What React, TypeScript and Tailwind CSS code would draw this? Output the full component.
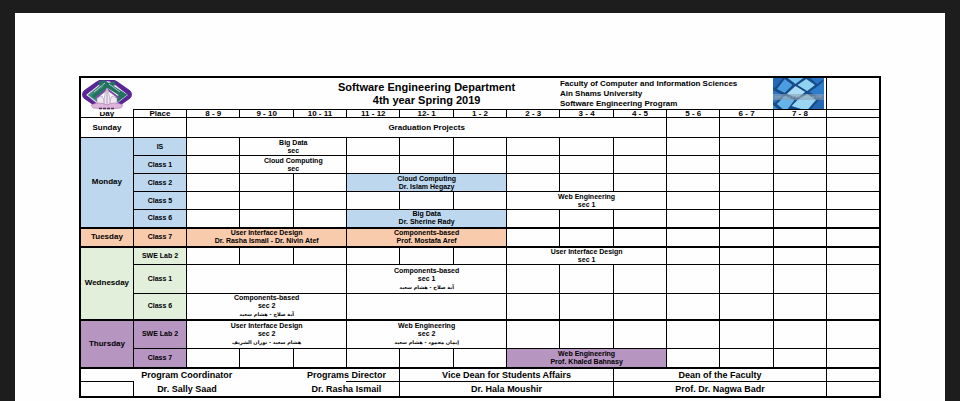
import React from 'react';

type Slot = { span?: number; lines?: string[]; arabic?: string; fill?: string };
type Row = {
  day?: string;
  daySpan?: number;
  tone: string;
  place: string;
  height: string;
  slots: Slot[];
};

const BLUE = 'bg-[#bdd7ee]';
const ORANGE = 'bg-[#f8cbad]';
const GREEN = 'bg-[#e2efda]';
const PURPLE = 'bg-[#b795c1]';

const HOURS = ['8 - 9', '9 - 10', '10 - 11', '11 - 12', '12- 1', '1 - 2', '2 - 3', '3 - 4', '4 - 5', '5 - 6', '6 - 7', '7 - 8'];

const blank = (count: number): Slot[] => Array.from({ length: count }, () => ({}));

const ROWS: Row[] = [
  { day: 'Monday', daySpan: 5, tone: BLUE, place: 'IS', height: 'h-[18px]', slots: [{}, { span: 2, lines: ['Big Data', 'sec'] }, ...blank(10)] },
  { tone: BLUE, place: 'Class 1', height: 'h-[18px]', slots: [{}, { span: 2, lines: ['Cloud Computing', 'sec'] }, ...blank(10)] },
  { tone: BLUE, place: 'Class 2', height: 'h-[18px]', slots: [...blank(3), { span: 3, lines: ['Cloud Computing', 'Dr. Islam Hegazy'], fill: BLUE }, ...blank(7)] },
  { tone: BLUE, place: 'Class 5', height: 'h-[18px]', slots: [...blank(6), { span: 3, lines: ['Web Engineering', 'sec 1'] }, ...blank(4)] },
  { tone: BLUE, place: 'Class 6', height: 'h-[18px]', slots: [...blank(3), { span: 3, lines: ['Big Data', 'Dr. Sherine Rady'], fill: BLUE }, ...blank(7)] },
  {
    day: 'Tuesday', daySpan: 1, tone: ORANGE, place: 'Class 7', height: 'h-[19px]',
    slots: [
      { span: 3, lines: ['User Interface Design', 'Dr. Rasha Ismail - Dr. Nivin Atef'], fill: ORANGE },
      { span: 3, lines: ['Components-based', 'Prof. Mostafa Aref'], fill: ORANGE },
      ...blank(7),
    ],
  },
  { day: 'Wednesday', daySpan: 3, tone: GREEN, place: 'SWE Lab 2', height: 'h-[18px]', slots: [...blank(6), { span: 3, lines: ['User Interface Design', 'sec 1'] }, ...blank(4)] },
  { tone: GREEN, place: 'Class 1', height: 'h-[29px]', slots: [{ span: 3 }, { span: 3, lines: ['Components-based', 'sec 1'], arabic: 'آية صلاح - هشام سعيد' }, ...blank(7)] },
  { tone: GREEN, place: 'Class 6', height: 'h-[26px]', slots: [{ span: 3, lines: ['Components-based', 'sec 2'], arabic: 'آية صلاح - هشام سعيد' }, { span: 3 }, ...blank(7)] },
  {
    day: 'Thursday', daySpan: 2, tone: PURPLE, place: 'SWE Lab 2', height: 'h-[29px]',
    slots: [
      { span: 3, lines: ['User Interface Design', 'sec 2'], arabic: 'هشام سعيد - نوران الشريف' },
      { span: 3, lines: ['Web Engineering', 'sec 2'], arabic: 'إيمان محمود - هشام سعيد' },
      ...blank(7),
    ],
  },
  { tone: PURPLE, place: 'Class 7', height: 'h-[19px]', slots: [...blank(6), { span: 3, lines: ['Web Engineering', 'Prof. Khaled Bahnasy'], fill: PURPLE }, ...blank(4)] },
];

function UniversityLogo() {
  return (
    <svg viewBox="0 0 50 32" className="block h-8 w-[50px]" role="img" aria-label="Ain Shams University">
      <rect width="50" height="32" fill="#fefefe" />
      <path d="M14 24 L4 17 Q1 14.500 4 12 L16 3.500 Q18 2 21 2 L24 2" fill="none" stroke="#5a2597" strokeWidth="5" />
      <path d="M36 24 L46 17 Q49 14.500 46 12 L34 3.500 Q32 2 29 2 L24 2" fill="none" stroke="#5a2597" strokeWidth="5" />
      <path d="M17 21 L9 15 L20 6 Q25 2 30 6 L41 15 L33 21" fill="none" stroke="#e9e2f0" strokeWidth="6" />
      <path d="M17 21 L9 15 L20 6 Q22 4 25 3" fill="none" stroke="#3f8a76" strokeWidth="4" />
      <path d="M17 4 L22 3 L41 15 L33 21" fill="none" stroke="#1f7460" strokeWidth="5" />
      <path d="M11 17 L27 5 L33 3" fill="none" stroke="#1f7460" strokeWidth="4" />
      <path d="M14 18 L25 9 L37 18" fill="none" stroke="#7c4aa5" strokeWidth="2" />
      <path d="M12 12 L23 3 M38 12 L27 4" stroke="#dcd2e8" strokeWidth="0.800" />
      <path d="M15 25 V18 L20 16 L22 20 L23.500 11 L25 8 L26.500 11 L28 20 L30 16 L35 18 V25 Z" fill="#f1e6f2" stroke="#a08fb1" strokeWidth="0.600" />
      <path d="M25 10 V24 M22 20 V25 M28 20 V25" stroke="#8f79a5" strokeWidth="0.700" />
      <path d="M9 25 Q17 21 25 25 Q33 21 41 25 L39 28 Q25 30 11 28 Z" fill="#dfb4db" stroke="#a678ad" strokeWidth="0.600" />
      <path d="M17 28.500 H33" stroke="#49334f" strokeWidth="1.500" strokeDasharray="3 1" />
    </svg>
  );
}

function KeyboardPicture() {
  return (
    <svg viewBox="0 0 52 31" preserveAspectRatio="none" className="block h-[31px] w-full pr-0.5" role="img" aria-label="Keyboard">
      <rect width="52" height="31" fill="#174a86" />
      <path d="M0 0 H10 L2 10 L0 9 Z" fill="#2468b8" />
      <path d="M12 1 L20 7 L12 15 L4 11 Z" fill="#4c9ce0" />
      <path d="M15 0 H31 L23 6 Z" fill="#79c4f0" />
      <path d="M23 8 L33 14 L25 20 L14 16 Z" fill="#a9dcf4" />
      <path d="M34 1 L43 7 L35 13 L25 7 Z" fill="#8fd2f2" />
      <path d="M38 0 H52 V1 L45 6 Z" fill="#2a76c8" />
      <path d="M46 8 L52 3 V17 L48 19 L37 14 Z" fill="#2f7ccb" />
      <path d="M0 12 L10 17 L2 25 L0 24 Z" fill="#2b75c4" />
      <path d="M12 18 L22 22 L15 31 H10 L4 26 Z" fill="#65b5e9" />
      <path d="M25 22 L35 16 L44 22 L36 31 H29 L19 28 Z" fill="#98d6f3" />
      <path d="M46 23 L52 20 V31 H39 Z" fill="#2468b4" />
      <path d="M0 27 L5 31 H0 Z" fill="#3f91da" />
      <path d="M0 16 H52 V22 H0 Z" fill="#8fa3b4" opacity="0.600" />
      <path d="M2 19 H50" stroke="#b9c6d1" strokeWidth="1" strokeDasharray="2 1 3 1" opacity="0.500" />
      <path d="M22 19 H28" stroke="#526879" strokeWidth="1" strokeDasharray="1 2" />
    </svg>
  );
}

export default function App() {
  return (
    <div className="flex min-h-screen flex-col bg-[#1d1d1d] px-[15px] pt-[13px] font-['Liberation_Sans',Arial,sans-serif] text-black">
      <main className="flex-1 bg-[#fefefe] px-16 pt-[63px]">
        <table className="w-full table-fixed border-collapse border-2 border-black text-center text-[7px] leading-[8px] font-bold [&_td]:p-0 [&_th]:p-0">
          <thead>
            <tr className="h-8">
              <td className="relative">
                <div className="absolute top-0.5 left-px"><UniversityLogo /></div>
              </td>
              <td colSpan={3} className="border-b border-black" />
              <td colSpan={5} className="border-b border-black text-[11px] leading-[13px]">
                <h1 className="whitespace-nowrap">Software Engineering Department</h1>
                <p>4th year Spring 2019</p>
              </td>
              <td colSpan={4} className="border-b border-black pl-px text-left text-[8px] leading-[10px] whitespace-nowrap">
                <p>Faculty of Computer and Information Sciences</p>
                <p>Ain Shams University</p>
                <p>Software Engineering Program</p>
              </td>
              <td className="border-b border-black"><KeyboardPicture /></td>
              <td className="border-b border-l border-black" />
            </tr>
            <tr className="h-2 text-[8px] leading-[7px]">
              <th scope="col" className="border-r border-b border-black">Day</th>
              <th scope="col" className="border border-black">Place</th>
              {HOURS.map((hour) => (
                <th key={hour} scope="col" className="border border-black">{hour}</th>
              ))}
              <td className="border border-black" />
            </tr>
          </thead>
          <tbody>
            <tr className="h-5 text-[8px]">
              <th scope="row" className="border border-black">Sunday</th>
              <td className="border border-black" />
              <td colSpan={9} className="border border-black">Graduation Projects</td>
              {blank(4).map((_, i) => <td key={i} className="border border-black" />)}
            </tr>
            {ROWS.map((row, r) => (
              <tr key={r} className={`${row.height} ${row.day && r > 0 ? 'border-t-2 border-black' : ''}`}>
                {row.day && (
                  <th scope="rowgroup" rowSpan={row.daySpan} className={`border-x border-black text-[8px] ${row.tone}`}>{row.day}</th>
                )}
                <th scope="row" className={`border border-black ${row.tone}`}>{row.place}</th>
                {row.slots.map((slot, s) => (
                  <td key={s} colSpan={slot.span ?? 1} className={`border border-black whitespace-nowrap ${slot.fill ?? ''}`}>
                    {slot.lines?.map((line) => <p key={line}>{line}</p>)}
                    {slot.arabic && (
                      <p dir="rtl" lang="ar" className="font-['DejaVu_Sans',sans-serif] text-[5px]">{slot.arabic}</p>
                    )}
                  </td>
                ))}
              </tr>
            ))}
          </tbody>
          <tfoot className="border-t-2 border-black text-[9px] leading-[12px] whitespace-nowrap">
            <tr className="h-3.5">
              <td className="border-b border-black" />
              <td colSpan={2}>Program Coordinator</td>
              <td />
              <td colSpan={2} className="border-r border-black">Programs Director</td>
              <td colSpan={4} className="border border-black">Vice Dean for Students Affairs</td>
              <td colSpan={4} className="border border-black">Dean of the Faculty</td>
              <td className="border border-black" />
            </tr>
            <tr className="h-[15px]">
              <td className="border-r border-black" />
              <td colSpan={2}>Dr. Sally Saad</td>
              <td />
              <td colSpan={2} className="relative border-r border-black after:absolute after:-top-px after:right-0 after:h-px after:w-1/2 after:bg-black">Dr. Rasha Ismail</td>
              <td colSpan={4} className="border border-black">Dr. Hala Moushir</td>
              <td colSpan={4} className="border border-black">Prof. Dr. Nagwa Badr</td>
              <td className="border border-black" />
            </tr>
          </tfoot>
        </table>
      </main>
    </div>
  );
}
